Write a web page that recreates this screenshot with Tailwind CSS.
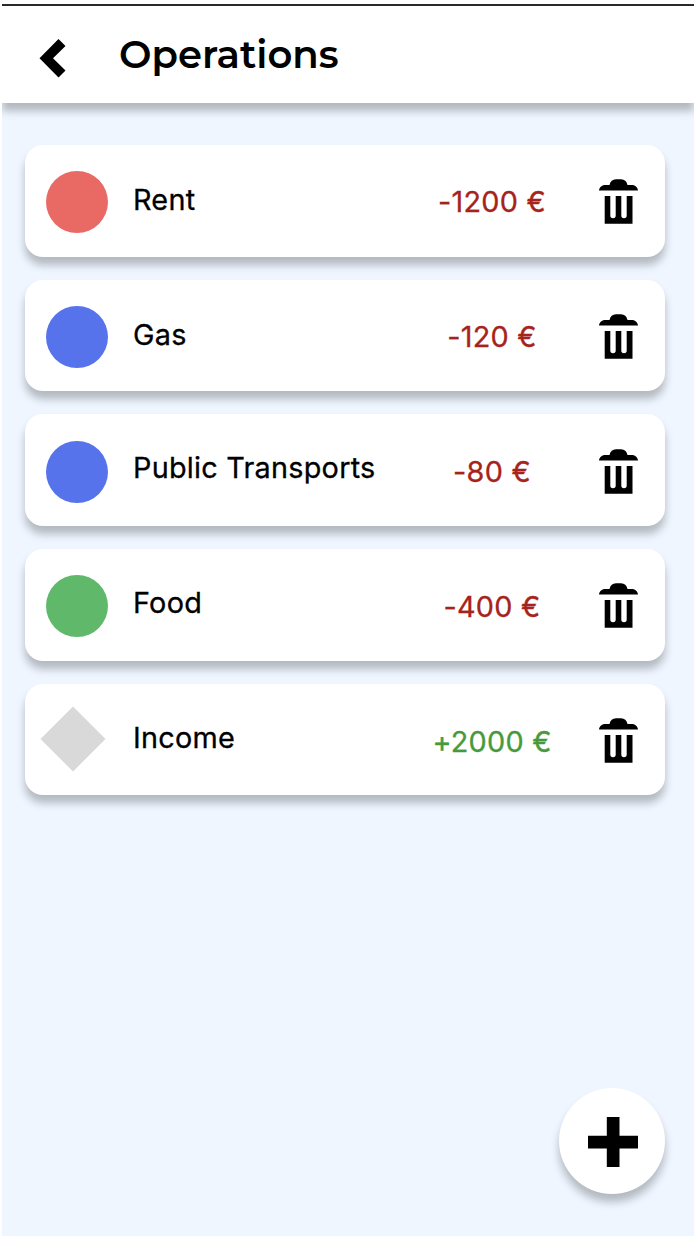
<!DOCTYPE html>
<html lang="en">
<head>
<meta charset="utf-8">
<title>Operations</title>
<script src="https://cdn.jsdelivr.net/npm/@tailwindcss/browser@4"></script>
</head>
<body class="bg-white font-['Inter',sans-serif] text-black">
<svg class="hidden">
  <symbol id="trash" viewBox="0 0 39 45">
    <path d="M0 11.500 C.3 8 3 6 7 6 H10.500 C11.300 2.500 13.500 .3 17 .3 H22 C25.500 .3 27.700 2.500 28.500 6 H32 C36 6 38.700 8 39 11.500 Z"/>
    <path d="M5.700 17 H11.300 V36.500 Q11.300 39.200 14 39.200 Q16.700 39.200 16.700 36.500 V17 H22.300 V36.500 Q22.300 39.200 25 39.200 Q27.700 39.200 27.700 36.500 V17 H33.500 V44.700 H5.700 Z"/>
  </symbol>
</svg>
<div class="relative mx-[2px] h-[1236px] overflow-hidden bg-[#eff6ff]">
  <div class="h-[4px] bg-white"></div>
  <header class="flex h-[98.500px] items-start border-t-[2px] border-[#2a2a2a] bg-white pl-[37px] shadow-[0_8px_8px_rgba(0,0,0,0.25)]">
    <svg class="mt-[33px] h-[39px] w-[27px] shrink-0" viewBox="0 0 27 39"><path d="M19.500 0 L26.500 7 L14 19.300 L26.500 31.500 L19.500 38.500 L.5 19.300 Z"/></svg>
    <h1 class="ml-[53px] mt-[25px] whitespace-nowrap font-['Montserrat','Inter',sans-serif] text-[38.600px] font-semibold leading-[48px]">Operations</h1>
  </header>
  <main class="flex flex-col gap-[23px] px-[23px] pt-[42.500px] text-[28.800px] tracking-[0.250px] [-webkit-text-stroke:0.300px]">
    <section class="flex h-[111.700px] w-[640px] items-center rounded-[18px] bg-white pl-[21px] shadow-[0_8px_8px_rgba(0,0,0,0.25)]">
      <div class="mt-[3px] size-[62px] rounded-full bg-[#e96a65]"></div>
      <div class="ml-[25px] mb-[2px] w-[280px] whitespace-nowrap">Rent</div>
      <div class="mt-[2px] w-[158px] text-center text-[#a6231b]">-1200 €</div>
      <svg class="ml-[28px] mt-[2px] h-[45px] w-[39px]"><use href="#trash"/></svg>
    </section>
    <section class="flex h-[111.700px] w-[640px] items-center rounded-[18px] bg-white pl-[21px] shadow-[0_8px_8px_rgba(0,0,0,0.25)]">
      <div class="mt-[3px] size-[62px] rounded-full bg-[#5673ec]"></div>
      <div class="ml-[25px] mb-[2px] w-[280px] whitespace-nowrap">Gas</div>
      <div class="mt-[2px] w-[158px] text-center text-[#a6231b]">-120 €</div>
      <svg class="ml-[28px] mt-[2px] h-[45px] w-[39px]"><use href="#trash"/></svg>
    </section>
    <section class="flex h-[111.700px] w-[640px] items-center rounded-[18px] bg-white pl-[21px] shadow-[0_8px_8px_rgba(0,0,0,0.25)]">
      <div class="mt-[3px] size-[62px] rounded-full bg-[#5673ec]"></div>
      <div class="ml-[25px] mb-[5px] w-[280px] whitespace-nowrap">Public Transports</div>
      <div class="mt-[3px] w-[158px] text-center text-[#a6231b]">-80 €</div>
      <svg class="ml-[28px] mt-[2px] h-[45px] w-[39px]"><use href="#trash"/></svg>
    </section>
    <section class="flex h-[111.700px] w-[640px] items-center rounded-[18px] bg-white pl-[21px] shadow-[0_8px_8px_rgba(0,0,0,0.25)]">
      <div class="mt-[3px] size-[62px] rounded-full bg-[#60b96a]"></div>
      <div class="ml-[25px] mb-[5px] w-[280px] whitespace-nowrap">Food</div>
      <div class="mt-[3px] w-[158px] text-center text-[#a6231b]">-400 €</div>
      <svg class="ml-[28px] mt-[2px] h-[45px] w-[39px]"><use href="#trash"/></svg>
    </section>
    <section class="flex h-[111.700px] w-[640px] items-center rounded-[18px] bg-white pl-[15px] shadow-[0_8px_8px_rgba(0,0,0,0.25)]">
      <svg class="mb-[1px] h-[66px] w-[66px] fill-[#d9d9d9]" viewBox="0 0 66 66"><path d="M33 .5 L65.500 33 L33 65.500 L.5 33 Z"/></svg>
      <div class="ml-[27px] mb-[4px] w-[280px] whitespace-nowrap">Income</div>
      <div class="mt-[3px] w-[158px] text-center text-[#479a3b]">+2000 €</div>
      <svg class="ml-[28px] mt-[2px] h-[45px] w-[39px]"><use href="#trash"/></svg>
    </section>
  </main>
  <button class="absolute left-[557px] top-[1088px] flex size-[106px] items-center justify-center rounded-full bg-white shadow-[0_8px_8px_rgba(0,0,0,0.25)]" aria-label="Add">
    <svg class="ml-[1px] mt-[2px] size-[50px]" viewBox="0 0 50 50"><path d="M18.800 0 H31.500 V18.700 H50 V31.500 H31.500 V50 H18.800 V31.500 H0 V18.700 H18.800 Z"/></svg>
  </button>
</div>
</body>
</html>
